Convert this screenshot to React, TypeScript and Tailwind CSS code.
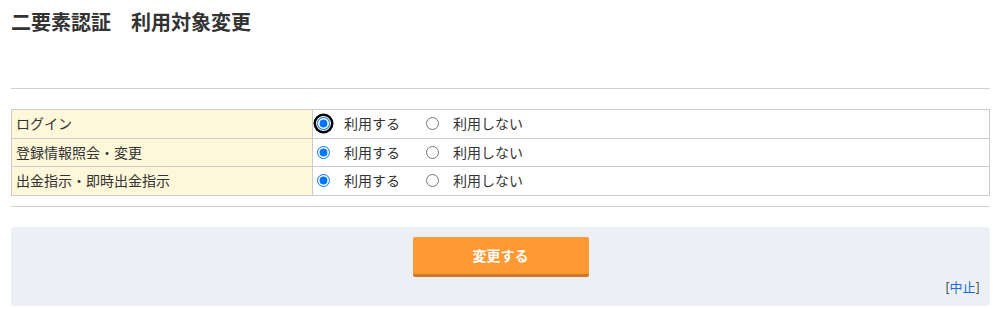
import React from "react";

const rows = ["ログイン", "登録情報照会・変更", "出金指示・即時出金指示"];

export default function App() {
  return (
    <div className="w-[993px] h-[309px] bg-white pl-[11px] pr-[3px] text-[#333] font-['Noto_Sans_CJK_JP','Noto_Sans',sans-serif]">
      <h1 className="pt-[9px] text-[20px] font-bold leading-[26px]">
        二要素認証　利用対象変更
      </h1>
      <hr className="mt-[53px] border-t border-[#d0d0d0]" />
      <table className="mt-5 w-full border-collapse text-[14px]">
        <tbody>
          {rows.map((label, i) => (
            <tr key={label} className={i === 1 ? "h-[28px]" : "h-[29px]"}>
              <td className="w-[301px] border border-[#ccc] bg-[#fef7d9] px-[4px] pb-[2px] leading-none">{label}</td>
              <td className="border border-[#ccc] px-[4px] pb-[1px] leading-none">
                <div className="flex items-center">
                  <label className="flex items-center">
                    <span
                      className={`inline-flex rounded-full ${i === 0 ? "ring-[2.5px] ring-black ring-offset-1" : ""}`}
                    >
                      <input
                        type="radio"
                        name={`r${i}`}
                        defaultChecked
                        className="m-0 h-[13px] w-[13px] accent-[#0075ff] outline-none"
                      />
                    </span>
                    <span className="ml-[14px] pb-[1px]">利用する</span>
                  </label>
                  <label className="ml-[26px] flex items-center">
                    <input type="radio" name={`r${i}`} className="m-0 h-[13px] w-[13px]" />
                    <span className="ml-[14px] pb-[1px]">利用しない</span>
                  </label>
                </div>
              </td>
            </tr>
          ))}
        </tbody>
      </table>
      <hr className="mt-[10px] border-t border-[#d0d0d0]" />
      <div className="mt-5 h-[79px] rounded-[4px] bg-[#ecf0f4] flex flex-col items-center pt-[10px]">
        <button className="h-[40px] w-[176px] rounded-[2px] border-b-[3px] border-[#d0782a] bg-[#ff9933] text-[14px] font-bold text-white">
          変更する
        </button>
        <div className="self-end mr-[10px] mt-[3px] text-[13px] leading-none">
          <span className="text-[#333]">[</span>
          <a className="text-[#1a6dd8]">中止</a>
          <span className="text-[#333]">]</span>
        </div>
      </div>
    </div>
  );
}
